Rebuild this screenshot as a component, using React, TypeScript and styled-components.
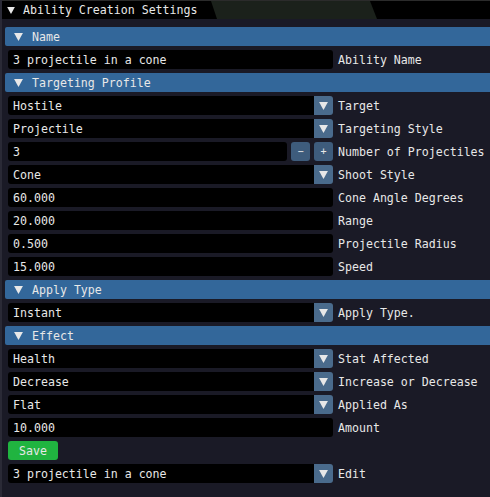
import React from 'react';
import styled, { createGlobalStyle } from 'styled-components';

const GlobalStyle = createGlobalStyle`
  html, body {
    margin: 0;
    padding: 0;
    background: #1a1a26;
  }
  * {
    box-sizing: border-box;
  }
`;

const Window = styled.div`
  width: 490px;
  height: 497px;
  overflow: hidden;
  display: flex;
  flex-direction: column;
  background: #1a1a26;
  border-left: 2px solid #2a2a36;
  font-family: 'DejaVu Sans Mono', 'Liberation Mono', monospace;
  font-size: 11.6px;
  color: #e8e8e8;
`;

const TitleBar = styled.div`
  height: 19px;
  flex: none;
  display: flex;
  background: #000;
  border-top: 1px solid #2b2b2b;
`;

const TitleLabel = styled.div`
  width: 209px;
  flex: none;
  display: flex;
  align-items: center;
  gap: 8px;
  padding-left: 5px;
`;

const TitleTab = styled.div`
  width: 166px;
  flex: none;
  background: #1b211b;
  clip-path: polygon(0 0, 159px 0, 166px 100%, 6px 100%);
`;

const Body = styled.div`
  display: flex;
  flex-direction: column;
  gap: 4px;
  padding: 8px 0 0 6px;
`;

const Header = styled.div`
  height: 19px;
  margin-left: -3px;
  display: flex;
  align-items: center;
  gap: 9px;
  padding-left: 9px;
  background: #33679a;
  border-radius: 2px 0 0 2px;
`;

const Row = styled.div`
  height: 19px;
  display: flex;
  align-items: center;
`;

const Controls = styled.div`
  width: 325px;
  height: 19px;
  flex: none;
  display: flex;
  gap: 4px;
`;

const Field = styled.div<{ $combo?: boolean }>`
  flex: 1;
  height: 19px;
  display: flex;
  align-items: center;
  padding-left: 5px;
  background: #000;
  border-radius: ${(p) => (p.$combo ? '3px 0 0 3px' : '3px')};
  white-space: nowrap;
  overflow: hidden;
`;

const ComboGroup = styled.div`
  flex: 1;
  display: flex;
`;

const ArrowButton = styled.div`
  width: 19px;
  height: 19px;
  flex: none;
  display: flex;
  align-items: center;
  justify-content: center;
  background: #4a6b8c;
  border-radius: 0 3px 3px 0;
`;

const StepButton = styled.div`
  width: 19px;
  height: 19px;
  flex: none;
  display: flex;
  align-items: center;
  justify-content: center;
  background: #3e5c7c;
  border-radius: 3px;
  font-size: 10px;
`;

const Label = styled.span`
  margin-left: 5px;
  white-space: nowrap;
`;

const SaveButton = styled.div`
  width: 50px;
  height: 19px;
  display: flex;
  align-items: center;
  justify-content: center;
  background: #20b440;
  border-radius: 3px;
`;

const Arrow = ({ size = 9 }: { size?: number }) => (
  <svg width={size} height={size - 1} viewBox="0 0 10 9">
    <polygon points="0,0 10,0 5,9" fill="#e8e8e8" />
  </svg>
);

const InputRow = ({ value, label }: { value: string; label: string }) => (
  <Row>
    <Controls>
      <Field>{value}</Field>
    </Controls>
    <Label>{label}</Label>
  </Row>
);

const ComboRow = ({ value, label }: { value: string; label: string }) => (
  <Row>
    <Controls>
      <ComboGroup>
        <Field $combo>{value}</Field>
        <ArrowButton>
          <Arrow />
        </ArrowButton>
      </ComboGroup>
    </Controls>
    <Label>{label}</Label>
  </Row>
);

const Section = ({ title }: { title: string }) => (
  <Header>
    <Arrow />
    <span>{title}</span>
  </Header>
);

export default function App() {
  return (
    <>
      <GlobalStyle />
      <Window>
        <TitleBar>
          <TitleLabel>
            <Arrow size={8} />
            <span>Ability Creation Settings</span>
          </TitleLabel>
          <TitleTab />
        </TitleBar>
        <Body>
          <Section title="Name" />
          <InputRow value="3 projectile in a cone" label="Ability Name" />
          <Section title="Targeting Profile" />
          <ComboRow value="Hostile" label="Target" />
          <ComboRow value="Projectile" label="Targeting Style" />
          <Row>
            <Controls>
              <Field>3</Field>
              <StepButton>−</StepButton>
              <StepButton>+</StepButton>
            </Controls>
            <Label>Number of Projectiles</Label>
          </Row>
          <ComboRow value="Cone" label="Shoot Style" />
          <InputRow value="60.000" label="Cone Angle Degrees" />
          <InputRow value="20.000" label="Range" />
          <InputRow value="0.500" label="Projectile Radius" />
          <InputRow value="15.000" label="Speed" />
          <Section title="Apply Type" />
          <ComboRow value="Instant" label="Apply Type." />
          <Section title="Effect" />
          <ComboRow value="Health" label="Stat Affected" />
          <ComboRow value="Decrease" label="Increase or Decrease" />
          <ComboRow value="Flat" label="Applied As" />
          <InputRow value="10.000" label="Amount" />
          <Row>
            <SaveButton>Save</SaveButton>
          </Row>
          <ComboRow value="3 projectile in a cone" label="Edit" />
        </Body>
      </Window>
    </>
  );
}
